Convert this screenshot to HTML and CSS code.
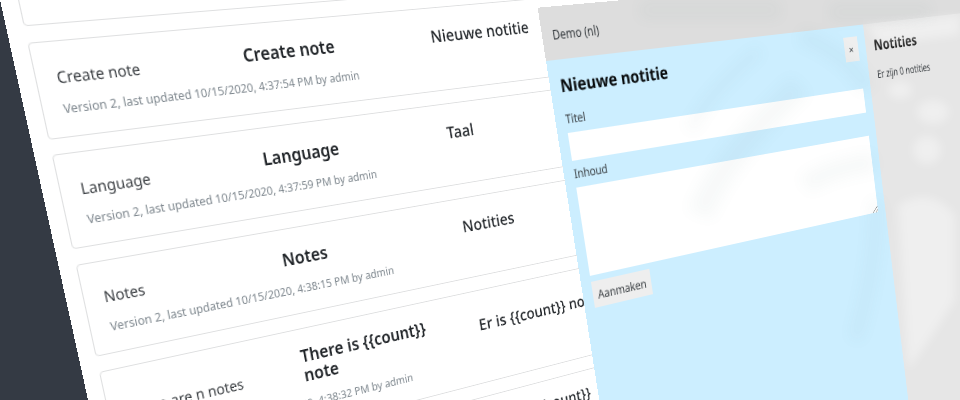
FILE: index.html
```html
<!DOCTYPE html>
<html lang="en">
<head>
<meta charset="utf-8">
<title>Translations</title>
<link rel="stylesheet" href="styles.css">
</head>
<body>
<div class="stage">
  <main class="board">
    <article class="card blank"></article>
    <article class="card">
      <div class="row"><span class="key">Create note</span><span class="source">Create note</span><span class="target">Nieuwe notitie</span></div>
      <p class="meta">Version 2, last updated 10/15/2020, 4:37:54 PM by admin</p>
    </article>
    <article class="card">
      <div class="row"><span class="key">Language</span><span class="source">Language</span><span class="target">Taal</span></div>
      <p class="meta">Version 2, last updated 10/15/2020, 4:37:59 PM by admin</p>
    </article>
    <article class="card">
      <div class="row"><span class="key">Notes</span><span class="source">Notes</span><span class="target">Notities</span></div>
      <p class="meta">Version 2, last updated 10/15/2020, 4:38:15 PM by admin</p>
    </article>
    <article class="card tall">
      <div class="row"><span class="key">There are n notes</span><span class="source">There is {{count}}<br>note</span><span class="target">Er is {{count}} notitie</span></div>
      <p class="meta">Version 2, last updated 10/15/2020, 4:38:32 PM by admin</p>
    </article>
    <article class="card tall">
      <div class="row"><span class="key"></span><span class="source"></span><span class="target">Er zijn {{count}}<br>&nbsp;</span></div>
    </article>
  </main>
  <section class="app">
    <header class="bar"><span class="text">Demo (nl)</span></header>
    <div class="panes">
      <form class="editor">
        <div class="title-row"><h2>Nieuwe notitie</h2><span class="close">×</span></div>
        <label>Titel</label>
        <div class="input"></div>
        <label>Inhoud</label>
        <div class="area"><svg class="grip" viewBox="0 0 8 8"><path d="M1 8 8 1M5 8 8 5" /></svg></div>
        <div class="submit"><span class="text">Aanmaken</span></div>
      </form>
      <aside class="list"><h3>Notities</h3><p>Er zijn 0 notities</p></aside>
    </div>
  </section>
  <svg class="sheen" viewBox="0 0 960 400">
    <g class="shade">
      <path d="M700 215Q720 160 800 85" stroke-width="26" />
      <path d="M805 185Q830 168 875 162" stroke-width="20" />
      <path d="M690 130Q710 90 760 50" stroke-width="12" />
      <path d="M800 35Q850 55 868 90" stroke-width="18" />
      <path d="M876 200Q876 270 855 340" stroke-width="14" />
      <path d="M640 10H780M830 12H930" stroke-width="18" />
    </g>
    <g class="light">
      <path d="M898 205Q930 185 955 215V300Q930 340 908 370Z" />
      <ellipse cx="933" cy="112" rx="16" ry="12" />
      <ellipse cx="900" cy="90" rx="12" ry="9" />
      <ellipse cx="927" cy="150" rx="14" ry="14" />
      <path d="M866 26 960 15V35L880 45Z" />
    </g>
  </svg>
</div>
</body>
</html>
```
FILE: styles.css
```css
* { box-sizing: border-box; }
body { margin: 0; font-family: "Noto Sans", "Open Sans", sans-serif; }
h2, h3, p { margin: 0; }

.stage {
  position: relative;
  width: 960px;
  height: 400px;
  overflow: hidden;
  background: #343a44;
}

/* Both planes are tilted sheets lying freely in the scene. */
.board, .app {
  position: absolute;
  left: 0;
  top: 0;
  transform-origin: 0 0;
}

.board {
  width: 900px;
  height: 760px;
  padding: 13.9px 16px 0 15.5px;
  background: #fff;
  transform: matrix3d(1.100324, -0.07792155, 0, 0.0004073657,
                      0.2265758, 1.030163, 0, 0.0001266916,
                      0, 0, 1, 0,
                      26.34718, 41.82112, 0, 1) translate(-15.3px, -125px);
}

.card {
  height: 96px;
  margin-bottom: 15.8px;
  padding: 18.6px 19px 0 19.6px;
  border: 1px solid #dedfe0;
  border-radius: 4px;
}
.card.tall { height: 113px; }

.row {
  display: grid;
  grid-template-columns: 189px 221px auto;
  align-items: center;
  min-height: 27px;
  line-height: 22px;
  white-space: nowrap;
}
.key, .source, .target, .meta, h2, h3, label, .list p, .text {
  display: block;
  transform-origin: 0 50%;
  white-space: nowrap;
}
.key { padding-top: 6px; font-size: 16px; color: #3b3f43; transform: scaleX(.92); }
.tall .key { padding-top: 9px; }
.source { font-size: 19px; font-weight: 600; color: #212529; transform: scaleX(.95); }
.target { font-size: 19px; font-weight: 500; color: #24282c; transform: scaleX(.98); }
.meta { margin-top: 10px; font-size: 12.8px; line-height: 20px; color: #7f888f; transform: scaleX(.925); }

.app {
  width: 620px;
  height: 640px;
  transform: matrix3d(1.312921, -0.08988126, 0, 0.0004948108,
                      0.2337680, 1.073833, 0, 0.0001213614,
                      0, 0, 1, 0,
                      537.6248, 7.678485, 0, 1);
  color: #34393d;
  font-size: 12px;
}
.bar {
  height: 50px;
  padding: 16.5px 10px 0;
  line-height: 20px;
  background: #dddddd;
}
.text { transform: scaleX(.84); }
.panes { display: grid; grid-template-columns: 360px 1fr; height: 590px; }

.editor { padding: 11.5px 10px; background: #cceeff; }
.title-row { display: flex; justify-content: space-between; height: 37.5px; }
h2 {
  padding-top: 3px;
  font-size: 17px;
  line-height: 20px;
  color: #080b0d;
  transform: scaleX(.88);
}
.close {
  width: 18.5px;
  height: 27px;
  background: #efefef;
  font-size: 11px;
  line-height: 27px;
  text-align: center;
}
label { height: 21px; line-height: 15.8px; transform: scaleX(.82); }
.input { height: 26.7px; margin-bottom: 5.6px; background: #fff; }
.area {
  display: flex;
  align-items: flex-end;
  justify-content: flex-end;
  height: 86.7px;
  margin-bottom: 6px;
  background: #fff;
}
.grip { width: 8px; height: 8px; fill: none; stroke: #777; stroke-width: .8; }
.submit {
  width: 60.5px;
  height: 26.5px;
  padding-left: 4.5px;
  line-height: 28px;
  background: #eee;
}

.list { padding: 12.5px 11px; background: #e6e6e6; }
h3 { font-size: 16.5px; line-height: 22px; color: #111; transform: scaleX(.9); }
.list p { padding-top: 12px; line-height: 20px; transform: scaleX(.83); }

/* Faint brushed reflections over the right sheet. */
.sheen { position: absolute; inset: 0; width: 960px; height: 400px; }
.shade { fill: none; stroke: #5f8580; opacity: .045; filter: blur(7px); }
.light { fill: #fff; opacity: .36; filter: blur(5px); }
```
